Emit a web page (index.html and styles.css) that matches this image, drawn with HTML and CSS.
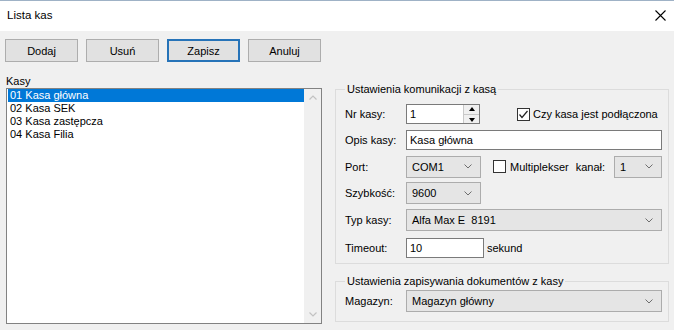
FILE: index.html
```html
<!DOCTYPE html>
<html lang="pl">
<head>
    <meta charset="UTF-8">
    <title>Lista kas</title>
    <link rel="stylesheet" href="styles.css">
</head>
<body>
<div class="window">
    <div class="titlebar">
        <span class="title">Lista kas</span>
        <svg class="close" width="11" height="11" viewBox="0 0 11 11"><path d="M0.5 0.5L10.5 10.5M10.5 0.5L0.5 10.5" stroke="#000" stroke-width="1.1" fill="none"/></svg>
    </div>

    <div class="content">
        <div class="toolbar">
            <button class="btn">Dodaj</button>
            <button class="btn">Usuń</button>
            <button class="btn btn-default">Zapisz</button>
            <button class="btn">Anuluj</button>
        </div>

        <div class="main">
            <div class="left">
                <div class="caption">Kasy</div>
                <div class="listbox">
                    <ul class="items">
                        <li class="selected">01 Kasa główna</li>
                        <li>02 Kasa SEK</li>
                        <li>03 Kasa zastępcza</li>
                        <li>04 Kasa Filia</li>
                    </ul>
                    <div class="scrollbar">
                        <div class="scroll-btn">
                            <svg width="8" height="5" viewBox="0 0 8 5"><path d="M0.5 4.5L4 1L7.5 4.5" fill="none" stroke="#c2c2c2" stroke-width="1.2"/></svg>
                        </div>
                        <div class="scroll-btn">
                            <svg width="8" height="5" viewBox="0 0 8 5"><path d="M0.5 0.5L4 4L7.5 0.5" fill="none" stroke="#c2c2c2" stroke-width="1.2"/></svg>
                        </div>
                    </div>
                </div>
            </div>

            <div class="right">
                <fieldset class="group group-comm">
                    <legend>Ustawienia komunikacji z kasą</legend>

                    <div class="row r1">
                        <span class="lbl">Nr kasy:</span>
                        <div class="spin">
                            <span class="spin-value">1</span>
                            <div class="spin-btns">
                                <span class="spin-up"></span>
                                <span class="spin-down"></span>
                            </div>
                        </div>
                        <span class="check check-connected">
                            <span class="box">
                                <svg width="11" height="11" viewBox="0 0 11 11"><path d="M1.5 5.5L4 8.5L9.5 2" fill="none" stroke="#222" stroke-width="1.2"/></svg>
                            </span>
                            Czy kasa jest podłączona
                        </span>
                    </div>

                    <div class="row r2">
                        <span class="lbl">Opis kasy:</span>
                        <input class="edit edit-wide" type="text" value="Kasa główna">
                    </div>

                    <div class="row r3">
                        <span class="lbl">Port:</span>
                        <div class="combo combo-small">
                            <span>COM1</span>
                            <svg width="8" height="5" viewBox="0 0 8 5"><path d="M0.5 0.5L4 4L7.5 0.5" fill="none" stroke="#6e6e6e"/></svg>
                        </div>
                        <span class="check check-mux">
                            <span class="box"></span>
                            Multiplekser
                        </span>
                        <span class="kanal">kanał:</span>
                        <div class="combo combo-kanal">
                            <span>1</span>
                            <svg width="8" height="5" viewBox="0 0 8 5"><path d="M0.5 0.5L4 4L7.5 0.5" fill="none" stroke="#6e6e6e"/></svg>
                        </div>
                    </div>

                    <div class="row r4">
                        <span class="lbl">Szybkość:</span>
                        <div class="combo combo-small">
                            <span>9600</span>
                            <svg width="8" height="5" viewBox="0 0 8 5"><path d="M0.5 0.5L4 4L7.5 0.5" fill="none" stroke="#6e6e6e"/></svg>
                        </div>
                    </div>

                    <div class="row r5">
                        <span class="lbl">Typ kasy:</span>
                        <div class="combo combo-wide">
                            <span>Alfa Max E&nbsp; 8191</span>
                            <svg width="8" height="5" viewBox="0 0 8 5"><path d="M0.5 0.5L4 4L7.5 0.5" fill="none" stroke="#6e6e6e"/></svg>
                        </div>
                    </div>

                    <div class="row r6">
                        <span class="lbl">Timeout:</span>
                        <input class="edit edit-timeout" type="text" value="10">
                        <span class="unit">sekund</span>
                    </div>
                </fieldset>

                <fieldset class="group group-docs">
                    <legend>Ustawienia zapisywania dokumentów z kasy</legend>
                    <div class="row r7">
                        <span class="lbl">Magazyn:</span>
                        <div class="combo combo-wide">
                            <span>Magazyn główny</span>
                            <svg width="8" height="5" viewBox="0 0 8 5"><path d="M0.5 0.5L4 4L7.5 0.5" fill="none" stroke="#6e6e6e"/></svg>
                        </div>
                    </div>
                </fieldset>
            </div>
        </div>
    </div>
</div>
</body>
</html>
```

FILE: styles.css
```css
* {
    box-sizing: border-box;
}
body {
    margin: 0;
    background-color: #f0f0f0;
    font-family: "Liberation Sans", Arial, sans-serif;
    font-size: 11px;
    color: #000;
}
.window {
    width: 674px;
    height: 330px;
    overflow: hidden;
    background-color: #f0f0f0;
}
.titlebar {
    height: 31px;
    background-color: #fff;
    border-top: 1px solid #9fb2c6;
    display: flex;
    align-items: center;
    justify-content: space-between;
    padding: 0 7px 2px 7px;
}
.title {
    font-size: 11.5px;
}
.close {
    margin-right: 1px;
}
.content {
    padding: 8px 5px 0 5px;
}
.toolbar {
    display: flex;
    gap: 8px;
}
.btn {
    width: 73px;
    height: 23px;
    background-color: #e1e1e1;
    border: 1px solid #adadad;
    font-family: inherit;
    font-size: 11px;
    color: #000;
    padding: 0;
    margin: 0;
}
.btn-default {
    border-color: #2673b8;
    box-shadow: inset 0 0 0 1px #2673b8;
}
.main {
    display: flex;
    gap: 13px;
    margin-top: 13px;
}
.left {
    width: 317px;
}
.caption {
    line-height: 13px;
    padding-left: 1px;
}
.listbox {
    margin-left: 1px;
    width: 316px;
    height: 236px;
    background: #fff;
    border: 1px solid #828282;
    display: flex;
}
.items {
    list-style: none;
    margin: 0;
    padding: 0 0 0 1px;
    flex: 1;
}
.items li {
    line-height: 13px;
    height: 13px;
    padding-left: 2px;
    white-space: nowrap;
}
.items li.selected {
    background-color: #0078d7;
    color: #fff;
}
.scrollbar {
    width: 17px;
    background-color: #f0f0f0;
    display: flex;
    flex-direction: column;
    justify-content: space-between;
}
.scroll-btn {
    height: 17px;
    display: flex;
    align-items: center;
    justify-content: center;
}
.right {
    width: 334px;
    padding-top: 8px;
}
.group {
    margin: 0;
    border: 1px solid #dcdcdc;
    padding: 5px 6px 2px 9px;
}
.group legend {
    padding: 0 2px;
    line-height: 13px;
}
.group-docs {
    margin-top: 11px;
    padding-top: 1px;
    padding-bottom: 8px;
}
.row {
    display: flex;
    align-items: center;
}
.r1 { height: 26px; }
.r2 { height: 26px; }
.r3 { height: 27px; }
.r4 { height: 26px; }
.r5 { height: 28px; }
.r6 { height: 27px; }
.r7 { height: 24px; }
.lbl {
    width: 61px;
    flex-shrink: 0;
}
.spin {
    width: 74px;
    height: 20px;
    border: 1px solid #7a7a7a;
    background: #fff;
    display: flex;
}
.spin-value {
    flex: 1;
    padding-left: 3px;
    line-height: 18px;
}
.spin-btns {
    width: 16px;
    display: flex;
    flex-direction: column;
    border-left: 1px solid #c9c9c9;
    background: #f0f0f0;
}
.spin-up,
.spin-down {
    flex: 1;
    position: relative;
}
.spin-up {
    border-bottom: 1px solid #c9c9c9;
}
.spin-up::after,
.spin-down::after {
    content: "";
    position: absolute;
    left: 5px;
    width: 0;
    height: 0;
    border-left: 3px solid transparent;
    border-right: 3px solid transparent;
}
.spin-up::after {
    top: 2px;
    border-bottom: 4px solid #000;
}
.spin-down::after {
    top: 3px;
    border-top: 4px solid #000;
}
.check {
    display: flex;
    align-items: center;
    gap: 4px;
}
.check .box {
    width: 13px;
    height: 13px;
    border: 1px solid #333;
    background: #fff;
    display: flex;
    align-items: center;
    justify-content: center;
}
.check-connected {
    margin-left: 37px;
    gap: 3px;
}
.check-mux {
    margin-left: 12px;
}
.kanal {
    margin-left: 7px;
}
.edit {
    height: 20px;
    border: 1px solid #7a7a7a;
    background: #fff;
    font-family: inherit;
    font-size: 11px;
    color: #000;
    padding: 0 3px;
    margin: 0;
}
.edit-wide {
    flex: 1;
}
.edit-timeout {
    width: 78px;
}
.unit {
    margin-left: 3px;
}
.combo {
    height: 22px;
    border: 1px solid #acacac;
    background-color: #e5e5e5;
    display: flex;
    align-items: center;
    justify-content: space-between;
    padding: 0 8px 0 5px;
}
.combo-small {
    width: 75px;
}
.combo-kanal {
    width: 48px;
    margin-left: auto;
}
.combo-wide {
    flex: 1;
}
```
